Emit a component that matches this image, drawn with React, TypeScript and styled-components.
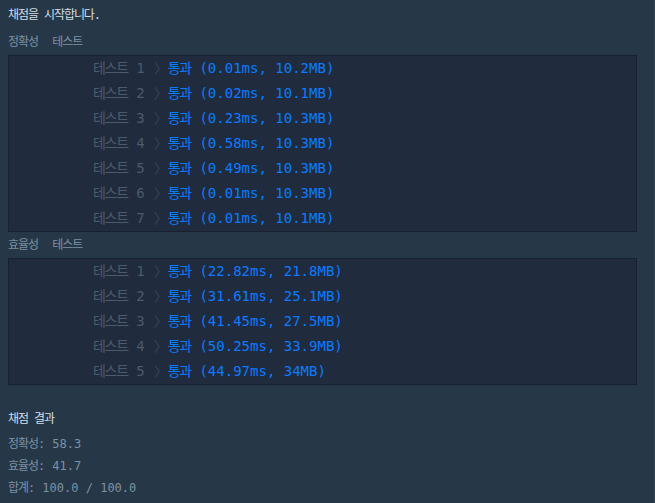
import React from "react";
import styled, { createGlobalStyle } from "styled-components";

const GlobalStyle = createGlobalStyle`
  html, body {
    margin: 0;
    padding: 0;
    background: #263747;
  }
`;

const Terminal = styled.div`
  box-sizing: border-box;
  min-height: 503px;
  padding: 5px 17px 8px 8px;
  background: #263747;
  border-right: 1px solid #33465a;
  font-family: "DejaVu Sans Mono", "Noto Sans CJK KR", monospace;
  white-space: pre;
`;

const Message = styled.div`
  font-size: 12px;
  line-height: 20px;
  color: #d5dde5;
  margin-bottom: 4px;
`;

const SectionLabel = styled.div`
  font-size: 12px;
  line-height: 20px;
  color: #7d91a4;
  padding: 3px 0 3px;
`;

const ResultBox = styled.div`
  background: #202b3d;
  border: 1px solid #172130;
`;

const Row = styled.div`
  box-sizing: border-box;
  display: flex;
  align-items: center;
  height: 25px;
  padding: 0 0 3px 84px;
  font-size: 14px;
`;

const TestName = styled.span`
  color: #4c5a6b;
`;

const Arrow = styled.span`
  color: #37465a;
  margin: 0 0 0 9px;
`;

const Passed = styled.span`
  color: #0c7bff;
`;

const Ko = styled.span`
  letter-spacing: -0.09em;
`;

const ScoreTitle = styled.div`
  font-size: 12px;
  line-height: 22px;
  color: #d5dde5;
  margin-top: 23px;
  margin-bottom: 3px;
`;

const ScoreLine = styled.div`
  font-size: 12px;
  line-height: 22px;
  color: #7d91a4;
`;

type Result = { time: string; mem: string };

const accuracy: Result[] = [
  { time: "0.01ms", mem: "10.2MB" },
  { time: "0.02ms", mem: "10.1MB" },
  { time: "0.23ms", mem: "10.3MB" },
  { time: "0.58ms", mem: "10.3MB" },
  { time: "0.49ms", mem: "10.3MB" },
  { time: "0.01ms", mem: "10.3MB" },
  { time: "0.01ms", mem: "10.1MB" },
];

const efficiency: Result[] = [
  { time: "22.82ms", mem: "21.8MB" },
  { time: "31.61ms", mem: "25.1MB" },
  { time: "41.45ms", mem: "27.5MB" },
  { time: "50.25ms", mem: "33.9MB" },
  { time: "44.97ms", mem: "34MB" },
];

const ResultRows = ({ results }: { results: Result[] }) => (
  <ResultBox>
    {results.map((r, i) => (
      <Row key={i}>
        <TestName>
          <Ko>테스트</Ko> {i + 1}
        </TestName>
        <Arrow>〉</Arrow>
        <Passed>
          <Ko>통과</Ko> ({r.time}, {r.mem})
        </Passed>
      </Row>
    ))}
  </ResultBox>
);

const App = () => {
  return (
    <>
      <GlobalStyle />
      <Terminal>
        <Message>
          <Ko>채점을 시작합니다</Ko>.
        </Message>
        <SectionLabel>
          <Ko>정확성</Ko>  <Ko>테스트</Ko>
        </SectionLabel>
        <ResultRows results={accuracy} />
        <SectionLabel>
          <Ko>효율성</Ko>  <Ko>테스트</Ko>
        </SectionLabel>
        <ResultRows results={efficiency} />
        <ScoreTitle>
          <Ko>채점 결과</Ko>
        </ScoreTitle>
        <ScoreLine>
          <Ko>정확성</Ko>: 58.3
        </ScoreLine>
        <ScoreLine>
          <Ko>효율성</Ko>: 41.7
        </ScoreLine>
        <ScoreLine>
          <Ko>합계</Ko>: 100.0 / 100.0
        </ScoreLine>
      </Terminal>
    </>
  );
};

export default App;
